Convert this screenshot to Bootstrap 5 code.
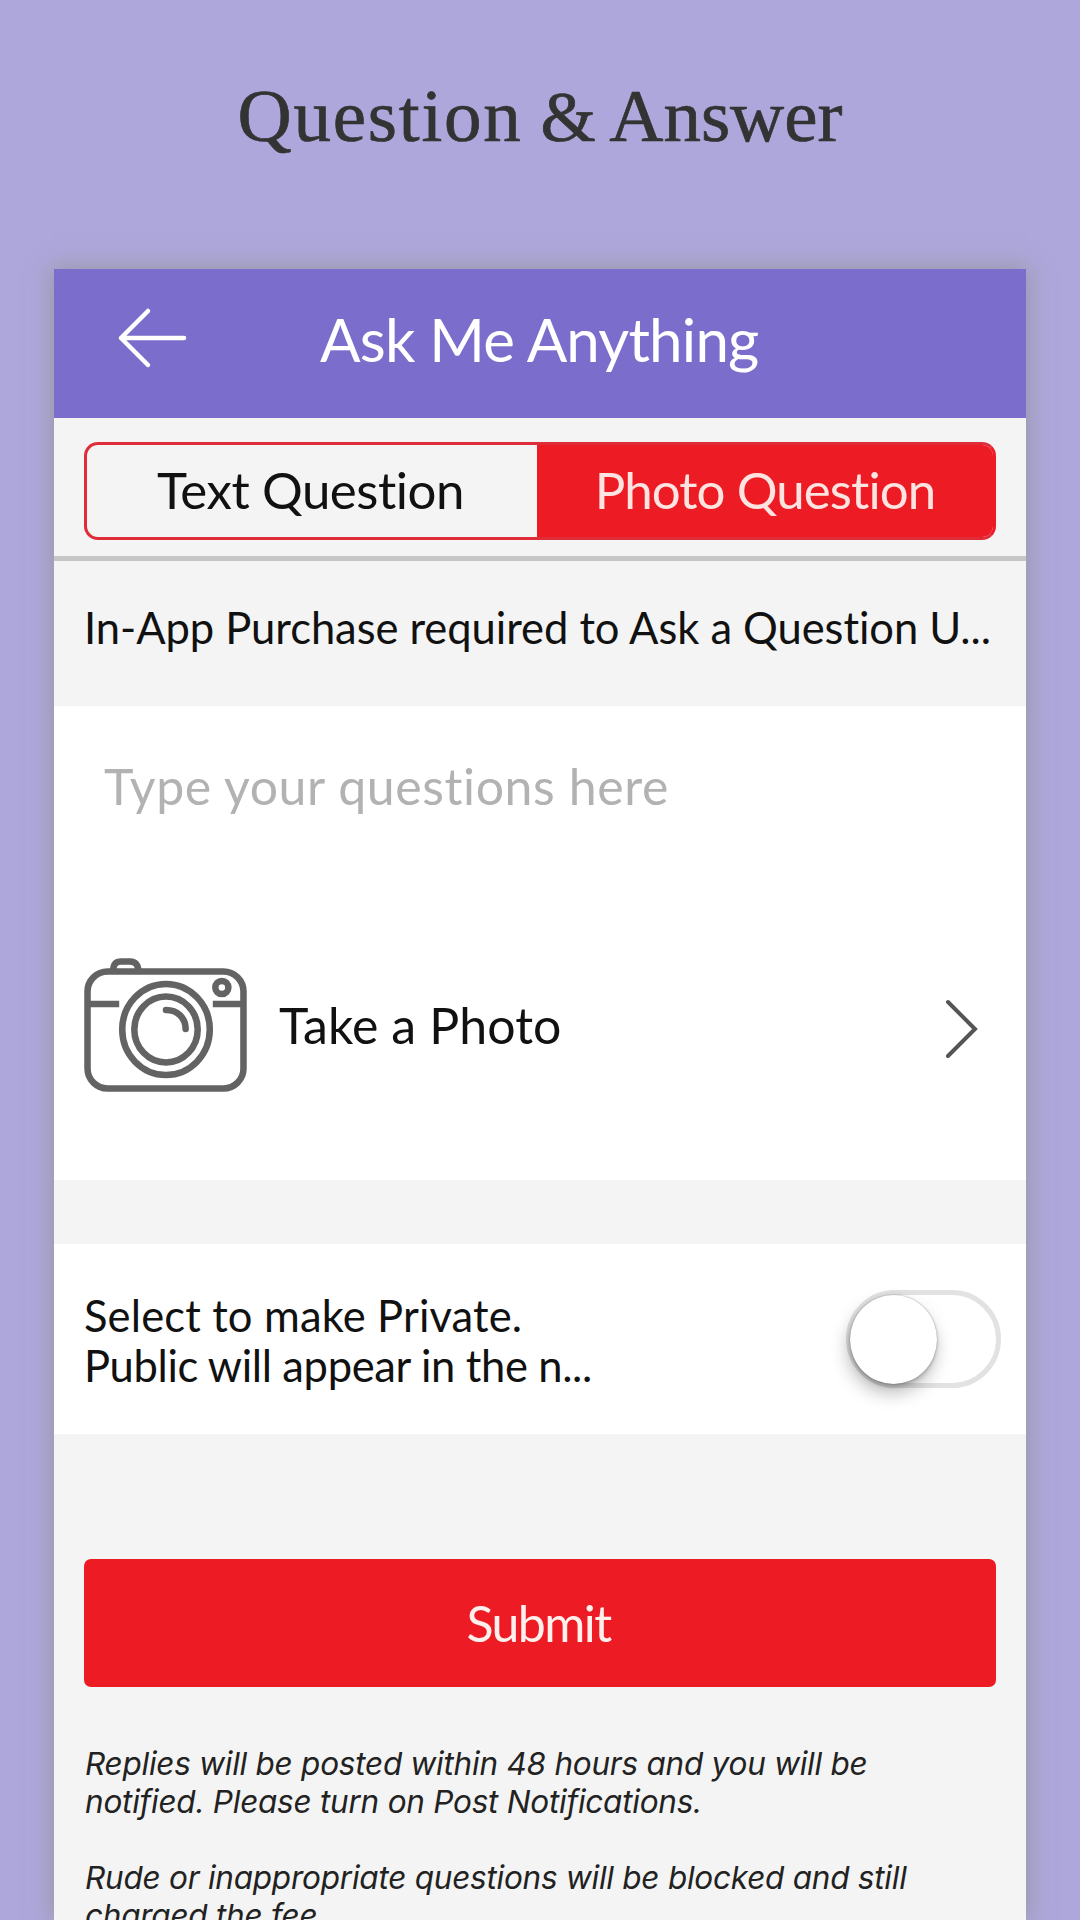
<!DOCTYPE html>
<html lang="en">
<head>
<meta charset="utf-8">
<meta name="viewport" content="width=device-width, initial-scale=1">
<title>Question &amp; Answer</title>
<link href="https://cdn.jsdelivr.net/npm/bootstrap@5.3.0/dist/css/bootstrap.min.css" rel="stylesheet">
<style>
body{background:#aea7db;font-family:Lato,"Liberation Sans",sans-serif;font-variant-ligatures:none;color:#111;height:1920px;overflow:hidden}
.page-title{height:269px;padding-top:74px;font:400 75px/84px "Liberation Serif",serif;color:#333;margin:0;-webkit-text-stroke:.7px #333}
.page-title .word{letter-spacing:1.8px}
.page-title .amp{font-size:71px;margin:0 -1px}
.phone{width:972px;height:1651px;margin:0 54px;background:#f4f4f4;box-shadow:0 0 22px 2px rgba(145,145,145,.75);white-space:nowrap}
.app-bar{height:149px;background:#7b6dcc;color:#fff;padding:0 0 12px}
.app-bar svg{margin-left:62px}
.app-bar h2{font-size:60px;font-weight:400;line-height:73px;letter-spacing:-.8px;margin:0 0 0 132px;padding-top:4px}
.tabs-row{height:143px;padding:24px 30px 0;border-bottom:5px solid #c6c6c6}
.seg{height:98px;border:3px solid #df2c38;border-right-color:#ed1c24;border-radius:14px;overflow:hidden;font-size:51px}
.seg-item{line-height:90px}
.seg-off{width:450px;letter-spacing:-.45px;padding-right:3px}
.seg-on{background:#ed1c24;color:#ffe3e0;letter-spacing:-.9px}
.notice{height:145px;padding:40px 0 0 30px;font-size:43.5px;line-height:52px;letter-spacing:-.05px}
.ask{height:474px;background:#fff}
.ask-input{height:252px;padding:50px 0 0 50px;font-size:50px;line-height:60px;letter-spacing:.6px;color:#b2b2b2}
.photo-row{height:134px;padding:0 48px 0 30px}
.photo-label{font-size:50px;letter-spacing:.1px;margin-left:32px}
.chevron{margin-top:7px}
.private-row{height:190px;margin-top:64px;background:#fff;padding:0 25px 0 30px}
.private-text{font-size:43.5px;line-height:50.5px;padding-top:2px;letter-spacing:.15px}
.private-text .hint{letter-spacing:-.35px}
.toggle{width:155px;height:98px;border:5px solid #e2e2e2;border-radius:50px}
.knob{width:87px;height:89px;margin-left:-1px;border-radius:50%;background:#fff;box-shadow:0 0 2px rgba(0,0,0,.35),-2px 9px 18px rgba(0,0,0,.28),0 3px 4px rgba(0,0,0,.15)}
.submit-btn{width:912px;height:128px;margin:125px 30px 0;border-radius:7px;border:0;background:#ed1c24;color:#fff0ee;font-size:50px;letter-spacing:-1.6px;padding-right:15px}
.submit-btn:hover{background:#ed1c24}
.fine{margin:58px 30px 0 31px;font:italic 400 31.5px/38px Inter,sans-serif;letter-spacing:-.24px;color:#222}
.fine p{margin:0 0 38px}
</style>
</head>
<body>
<h1 class="page-title text-center"><span class="word">Question</span> <span class="amp">&amp;</span> Answer</h1>
<main class="phone">
<header class="app-bar d-flex align-items-center">
<svg width="72" height="62" viewBox="0 0 72 62" fill="none" stroke="#fff" stroke-width="4.5" stroke-linecap="round" stroke-linejoin="round"><path d="M68 31H5M32 4L5 31L32 58"/></svg>
<h2>Ask Me Anything</h2>
</header>
<div class="tabs-row">
<div class="seg d-flex text-center">
<div class="seg-item seg-off">Text Question</div>
<div class="seg-item seg-on flex-grow-1">Photo Question</div>
</div>
</div>
<div class="notice">In-App Purchase required to Ask a Question U...</div>
<section class="ask">
<div class="ask-input">Type your questions here</div>
<div class="photo-row d-flex align-items-center">
<svg width="163" height="134" viewBox="0 0 162 134" preserveAspectRatio="none" fill="none" stroke="#636363" stroke-width="6.5"><rect x="3.5" y="13.500" width="155" height="117" rx="20"/><path d="M29 13C29 6 32 3.500 37 3.500H46C51 3.500 54 7 54 13"/><ellipse cx="81.500" cy="71.500" rx="43.500" ry="45.500"/><ellipse cx="81.500" cy="71.500" rx="31.500" ry="33"/><circle cx="137" cy="29.500" r="6.500"/><path d="M5 46H35M128 46H158"/><path d="M81.500 52C93 52 101 60 101 71" stroke-linecap="round"/></svg>
<span class="photo-label">Take a Photo</span>
<svg class="chevron ms-auto" width="34" height="60" viewBox="0 0 34 60" fill="none" stroke="#555" stroke-width="4" stroke-linecap="round"><path d="M4 3L31 30L4 57"/></svg>
</div>
</section>
<section class="private-row d-flex align-items-center justify-content-between">
<div class="private-text">Select to make Private.<br><span class="hint">Public will appear in the n...</span></div>
<div class="toggle"><div class="knob"></div></div>
</section>
<button class="submit-btn btn d-block">Submit</button>
<div class="fine"><p>Replies will be posted within 48 hours and you will be<br>notified. Please turn on Post Notifications.</p><p>Rude or inappropriate questions will be blocked and still<br>charged the fee.</p></div>
</main>
<script src="https://cdn.jsdelivr.net/npm/bootstrap@5.3.0/dist/js/bootstrap.bundle.min.js"></script>
</body>
</html>
